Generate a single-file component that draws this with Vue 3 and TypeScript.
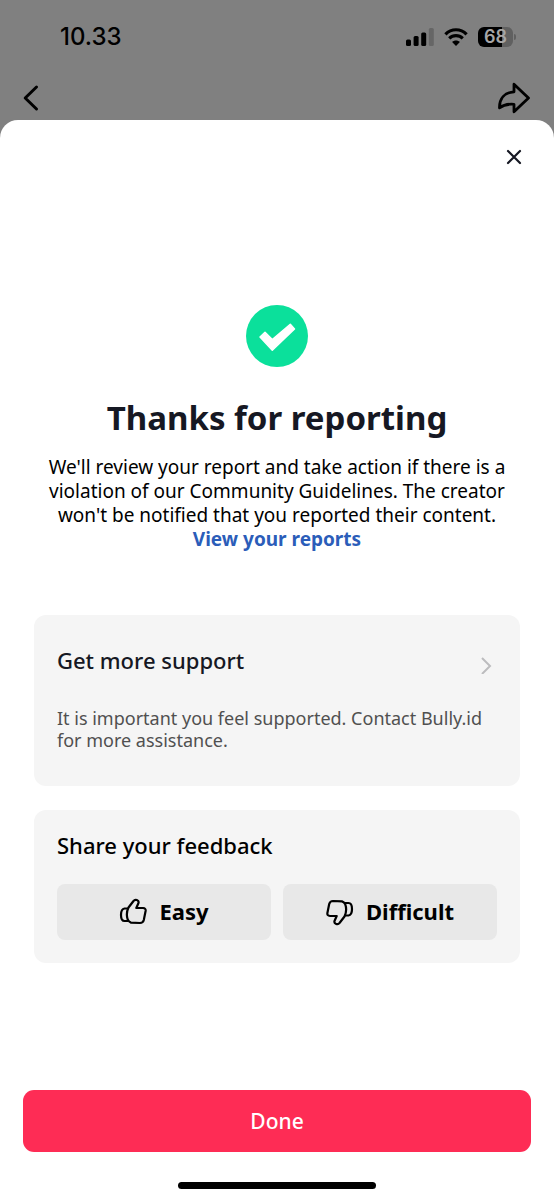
<script setup lang="ts">
import { ref } from 'vue'

type Feedback = 'Easy' | 'Difficult'

const options: Feedback[] = ['Easy', 'Difficult']
const chosen = ref<Feedback | null>(null)
</script>

<template>
  <div class="screen">
    <header class="top">
      <div class="status">
        <span class="time">10.33</span>
        <div class="indicators">
          <svg class="signal" width="28" height="20" viewBox="0 0 28 20" aria-hidden="true">
            <rect x="0" y="12.5" width="5" height="6.500" rx="1.5" />
            <rect x="7.6" y="9" width="5" height="10" rx="1.5" />
            <rect x="15.2" y="5.500" width="5" height="13.500" rx="1.5" />
            <rect x="22.8" y="1" width="5" height="18" rx="1.5" fill="#666" />
          </svg>
          <svg class="wifi" width="24" height="20" viewBox="0 0 24 20" aria-hidden="true">
            <path d="M1.400 7.3C7.4 1.2 16.6 1.2 22.600 7.3" fill="none" stroke="#000" stroke-width="3.2" />
            <path d="M5.2 11.4c3.9-3.7 9.7-3.7 13.600 0" fill="none" stroke="#000" stroke-width="3.1" />
            <path d="M12 19l-3.9-4c2.2-2 5.6-2 7.8 0z" />
          </svg>
          <span class="battery"><span class="level">68</span></span>
        </div>
      </div>
      <nav class="nav">
        <button class="icon-button" type="button" aria-label="Back">
          <svg width="18" height="28" viewBox="0 0 18 28" aria-hidden="true">
            <path d="M14.5 3L3.2 14l11.3 11" fill="none" stroke="#000" stroke-width="3" stroke-linecap="round" stroke-linejoin="round" />
          </svg>
        </button>
        <button class="icon-button" type="button" aria-label="Share">
          <svg width="34" height="32" viewBox="0 0 34 32" aria-hidden="true">
            <path
              d="M16 2.2L30.500 16 16 29.800v-7.500C9.500 21.800 5.500 22.800 1.500 25.800 1.300 16.500 6.500 10.500 16 9.800z"
              fill="none" stroke="#000" stroke-width="2.8" stroke-linejoin="round"
            />
          </svg>
        </button>
      </nav>
    </header>

    <main class="sheet">
      <div class="close-row">
        <button class="icon-button" type="button" aria-label="Close">
          <svg width="16" height="16" viewBox="0 0 16 16" aria-hidden="true">
            <path d="M2 2l12 12M14 2L2 14" fill="none" stroke="#161823" stroke-width="2.2" stroke-linecap="round" />
          </svg>
        </button>
      </div>

      <section class="intro">
        <svg width="62" height="62" viewBox="0 0 62 62" aria-hidden="true">
          <circle cx="31" cy="31" r="31" fill="#0be09b" />
          <path
            d="M14 32l5-4.600 7.300 7.200L44.300 19.200l4.200 4.700L26.300 45.200z"
            fill="#fff" stroke="#fff" stroke-width="1.500" stroke-linejoin="round"
          />
        </svg>
        <h1>Thanks for reporting</h1>
        <p>
          We'll review your report and take action if there is a violation of our Community
          Guidelines. The creator won't be notified that you reported their content.
          <a href="#reports">View your reports</a>
        </p>
      </section>

      <div class="cards">
        <a class="card support" href="#support">
          <div class="support-head">
            <h2>Get more support</h2>
            <svg width="12" height="18" viewBox="0 0 12 18" aria-hidden="true">
              <path d="M2 2l8 8-8 8" fill="none" stroke="#bcbcbe" stroke-width="2" />
            </svg>
          </div>
          <p>It is important you feel supported. Contact Bully.id for more assistance.</p>
        </a>

        <section class="card feedback">
          <h2>Share your feedback</h2>
          <div class="options">
            <button
              v-for="option in options"
              :key="option"
              type="button"
              class="option"
              :aria-pressed="chosen === option"
              @click="chosen = option"
            >
              <svg
                :class="{ down: option === 'Difficult' }"
                width="28" height="28" viewBox="0 0 28 28" aria-hidden="true"
                fill="none" stroke="#000" stroke-width="2.2" stroke-linejoin="round"
              >
                <path d="M9.500 9.500L14.500 3C16 .8 20.300 2 19.500 5L17.300 10H24Q27 10.200 26.600 13L24.800 22Q24 25 21 25L12 24.600Q10 24 8.800 21.800Q6.600 15.500 9.500 9.500z" />
                <path d="M9 10.500H5.500Q2 11 2 17Q2 23 5.500 23H9" />
              </svg>
              {{ option }}
            </button>
          </div>
        </section>
      </div>

      <footer class="footer">
        <button class="done" type="button">Done</button>
        <div class="home-indicator"></div>
      </footer>
    </main>
  </div>
</template>

<style>
body {
  margin: 0;
  background: #808080;
}
</style>

<style scoped>
.screen {
  display: flex;
  flex-direction: column;
  min-height: 100vh;
  background: #808080;
  color: #000;
  font-family: "Noto Sans", Roboto, sans-serif;
}

h1,
h2,
p {
  margin: 0;
}

button {
  border: 0;
  padding: 0;
  font-family: inherit;
  color: inherit;
  cursor: pointer;
}

svg {
  display: block;
  flex: none;
}

.icon-button {
  background: none;
}

.top {
  padding: 22px 22px 6px;
}

.status {
  display: flex;
  align-items: center;
  justify-content: space-between;
  height: 30px;
  padding: 0 16px 0 38px;
}

.time {
  font: 500 24px/32px Inter, sans-serif;
}

.indicators {
  display: flex;
  align-items: center;
  gap: 10px;
}

.battery {
  position: relative;
  width: 35px;
  height: 20px;
  margin-right: 3px;
  border-radius: 6px;
  background: linear-gradient(to right, #000 68%, #606060 68%);
}

.battery::after {
  content: "";
  position: absolute;
  top: 7px;
  right: -3px;
  width: 2px;
  height: 6px;
  border-radius: 0 2px 2px 0;
  background: #606060;
}

.level {
  display: block;
  color: #a6a6a6;
  font: 600 18px/20px Inter, sans-serif;
  text-align: center;
}

.nav {
  display: flex;
  align-items: center;
  justify-content: space-between;
  height: 32px;
  margin-top: 30px;
}

.sheet {
  display: flex;
  flex: 1;
  flex-direction: column;
  border-radius: 18px 18px 0 0;
  background: #fff;
}

.close-row {
  display: flex;
  justify-content: flex-end;
  padding: 29px 32px 0;
}

.intro {
  display: flex;
  flex-direction: column;
  align-items: center;
  padding: 140px 34px 0;
  text-align: center;
}

.intro h1 {
  margin-top: 31px;
  color: #161823;
  font-size: 33px;
  font-weight: 700;
  line-height: 40px;
}

.intro p {
  margin-top: 17px;
  font-size: 19px;
  line-height: 24px;
}

.intro a {
  display: block;
  color: #2b5db9;
  font-weight: 700;
  text-decoration: none;
}

.cards {
  display: flex;
  flex-direction: column;
  gap: 24px;
  padding: 64px 34px 32px;
}

.card {
  border-radius: 12px;
  background: #f5f5f5;
}

.card h2 {
  font-size: 22px;
  font-weight: 500;
  line-height: 28px;
}

.support {
  padding: 31px 28px 35px 23px;
  color: #161823;
  text-decoration: none;
}

.support-head {
  display: flex;
  align-items: flex-end;
  justify-content: space-between;
}

.support p {
  margin-top: 33px;
  color: #505050;
  font-size: 18px;
  line-height: 22px;
}

.feedback {
  padding: 21px 23px 23px;
}

.options {
  display: grid;
  grid-template-columns: 1fr 1fr;
  gap: 12px;
  margin-top: 25px;
}

.option {
  display: flex;
  align-items: center;
  justify-content: center;
  gap: 12px;
  height: 56px;
  padding-bottom: 2px;
  border-radius: 8px;
  background: #e8e8e8;
  font-size: 22px;
  font-weight: 700;
}

.option svg {
  margin-top: 2px;
}

.down {
  transform: rotate(180deg);
}

.footer {
  display: flex;
  flex-direction: column;
  align-items: center;
  gap: 30px;
  margin-top: auto;
  padding: 0 23px 11px;
}

.done {
  width: 100%;
  height: 62px;
  border-radius: 11px;
  background: #fe2c55;
  color: #fff;
  font-size: 21px;
  font-weight: 500;
}

.home-indicator {
  width: 39%;
  height: 7px;
  border-radius: 4px;
  background: #000;
}
</style>
